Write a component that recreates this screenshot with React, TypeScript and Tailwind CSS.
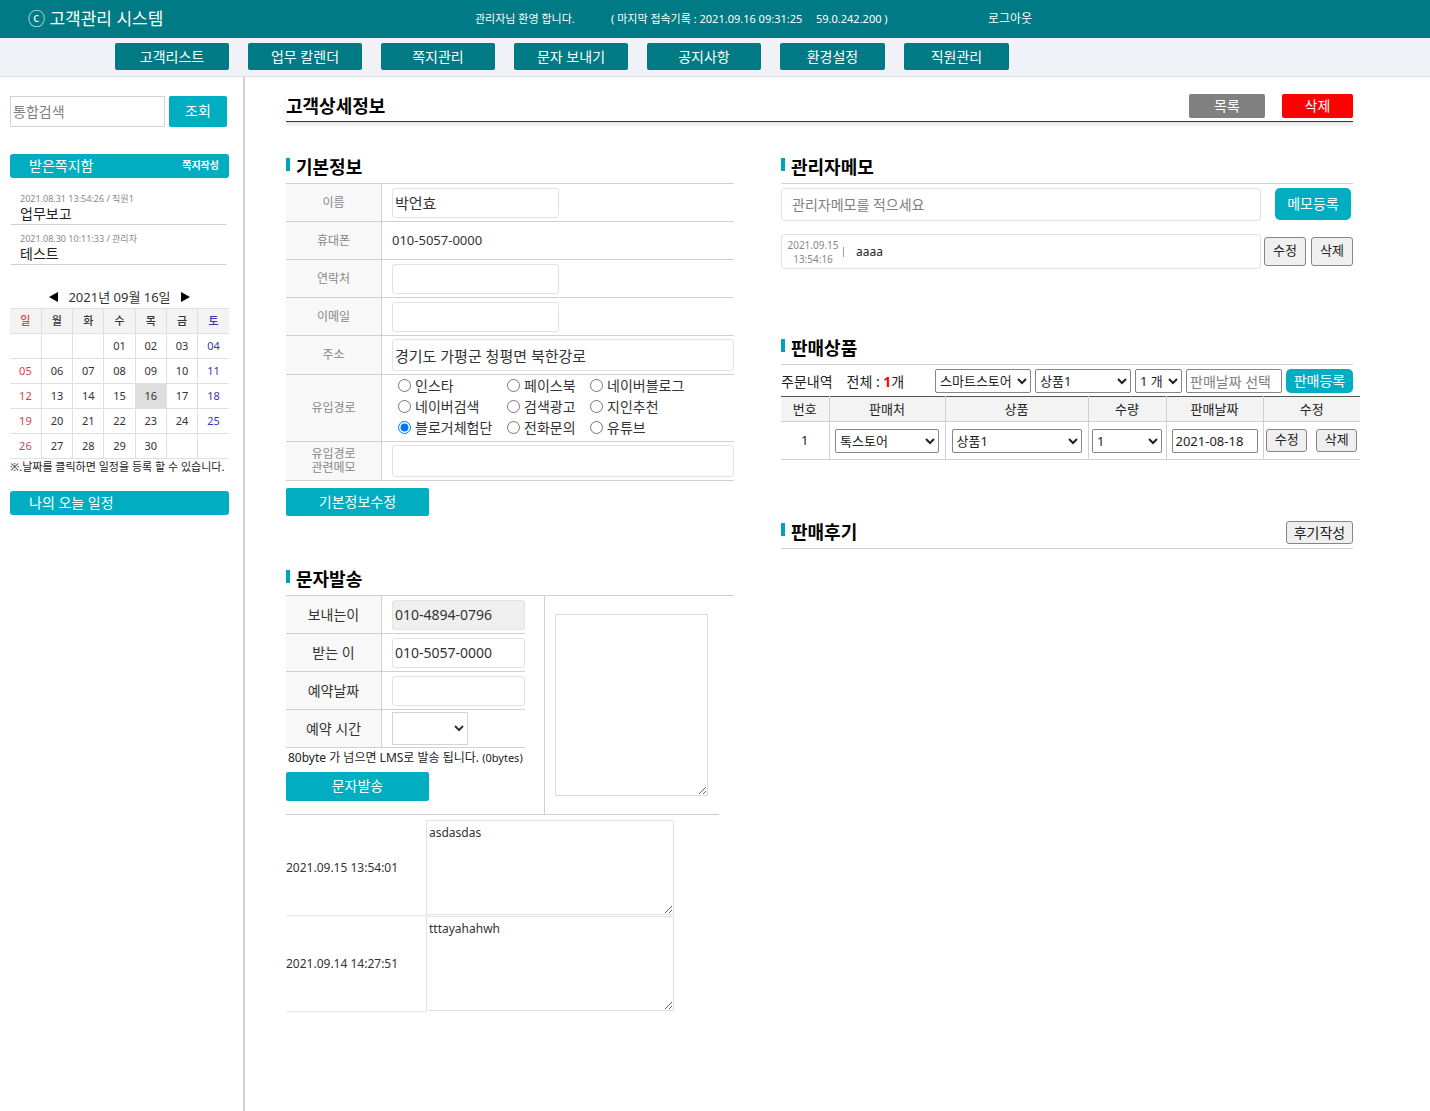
import { useState } from 'react';
import type { ReactNode } from 'react';

const menus = ['고객리스트', '업무 칼렌더', '쪽지관리', '문자 보내기', '공지사항'];
const adminMenus = ['환경설정', '직원관리'];

const messages = [
  { date: '2021.08.31 13:54:26', writer: '직원1', title: '업무보고' },
  { date: '2021.08.30 10:11:33', writer: '관리자', title: '테스트' },
];

const weekDays = ['일', '월', '화', '수', '목', '금', '토'];

const weeks = [
  ['', '', '', '01', '02', '03', '04'],
  ['05', '06', '07', '08', '09', '10', '11'],
  ['12', '13', '14', '15', '16', '17', '18'],
  ['19', '20', '21', '22', '23', '24', '25'],
  ['26', '27', '28', '29', '30', '', ''],
];

const routes = [
  '인스타',
  '페이스북',
  '네이버블로그',
  '네이버검색',
  '검색광고',
  '지인추천',
  '블로거체험단',
  '전화문의',
  '유튜브',
];

const history = [
  { date: '2021.09.15 13:54:01', text: 'asdasdas' },
  { date: '2021.09.14 14:27:51', text: 'tttayahahwh' },
];

const dayColor = (index: number) => {
  if (index === 0) return 'text-[#cf4450]';
  if (index === 6) return 'text-[#3b35b8]';
  return 'text-[#333]';
};

function Header() {
  return (
    <header>
      <div className="flex h-[38px] items-center bg-[#007a84] text-[11px] text-white">
        <h1 className="w-[475px] pl-[28px] text-[17px]">ⓒ 고객관리 시스템</h1>
        <span className="w-[136px]">관리자님 환영 합니다.</span>
        <span className="w-[205px]">( 마지막 접속기록 : 2021.09.16 09:31:25</span>
        <span className="w-[172px]">59.0.242.200 )</span>
        <a href="#logout" className="text-[12px]">로그아웃</a>
      </div>
      <nav className="flex h-[39px] items-center gap-[19px] border-b border-[#dcdedf] bg-[#f0f2f7] pb-[2px] pl-[115px] text-[14px] text-white">
        {menus.map((menu) => (
          <a
            key={menu}
            href="#menu"
            className="flex h-[27px] w-[114px] items-center justify-center rounded-[2px] bg-[#007a84]"
          >
            {menu}
          </a>
        ))}
        {adminMenus.map((menu) => (
          <a
            key={menu}
            href="#menu"
            className="flex h-[27px] w-[105px] items-center justify-center rounded-[2px] bg-[#007a84]"
          >
            {menu}
          </a>
        ))}
      </nav>
    </header>
  );
}

function Calendar() {
  return (
    <div className="mt-[22px]">
      <div className="flex h-[21px] items-center justify-center gap-[10px] text-[13px] text-[#333]">
        <button type="button" aria-label="이전 달">
          <svg width="9" height="10" viewBox="0 0 9 10">
            <path d="M9 0v10L0 5z" fill="#000" />
          </svg>
        </button>
        <span>2021년 09월 16일</span>
        <button type="button" aria-label="다음 달">
          <svg width="9" height="10" viewBox="0 0 9 10">
            <path d="M0 0v10l9-5z" fill="#000" />
          </svg>
        </button>
      </div>
      <table className="w-full table-fixed border-collapse text-center text-[11px] leading-[24px]">
        <thead>
          <tr className="h-[25px] border-y border-[#e0e0e0] bg-[#f3f3f3]">
            {weekDays.map((day, index) => (
              <th
                key={day}
                className={`border-r border-[#e0e0e0] p-0 font-medium last:border-r-0 ${dayColor(index)}`}
              >
                {day}
              </th>
            ))}
          </tr>
        </thead>
        <tbody>
          {weeks.map((week, row) => (
            <tr key={row} className="h-[25px] border-b border-[#e0e0e0]">
              {week.map((day, index) => (
                <td
                  key={index}
                  className={`border-r border-[#e0e0e0] p-0 last:border-r-0 ${dayColor(index)} ${
                    day === '16' ? 'bg-[#dedede]' : ''
                  }`}
                >
                  {day}
                </td>
              ))}
            </tr>
          ))}
        </tbody>
      </table>
      <p className="text-[11px] leading-[16px] whitespace-nowrap text-[#222]">
        ※.날짜를 클릭하면 일정을 등록 할 수 있습니다.
      </p>
    </div>
  );
}

function Sidebar() {
  return (
    <aside className="w-[245px] shrink-0 border-r-2 border-[#d2d2d2] pt-[19px] pr-[14px] pl-[10px]">
      <form className="flex gap-1" onSubmit={(e) => e.preventDefault()}>
        <input
          type="text"
          aria-label="통합검색"
          placeholder="통합검색"
          className="h-[31px] w-[155px] border border-[#d3d3d3] px-[2px] text-[14px] placeholder:text-[#808080]"
        />
        <button type="submit" className="h-[31px] w-[58px] rounded-[2px] bg-[#00adc1] text-[14px] text-white">
          조회
        </button>
      </form>

      <div className="mt-[27px] flex h-6 items-center justify-between rounded-[3px] bg-[#00adc1] pr-[10px] pb-[2px] pl-[19px] text-[14px] text-white">
        <h2>받은쪽지함</h2>
        <a href="#write" className="text-[10px] font-bold">쪽지작성</a>
      </div>
      <ul className="mt-[7px] mr-[3px] ml-[1px]">
        {messages.map((message) => (
          <li key={message.date} className="h-10 border-b border-[#cfcfcf] pt-[7px] pl-[9px]">
            <p className="text-[9px] leading-[14px] text-[#888]">
              {message.date} / {message.writer}
            </p>
            <p className="text-[14px] leading-[16px] text-[#222]">{message.title}</p>
          </li>
        ))}
      </ul>

      <Calendar />

      <h2 className="mt-4 flex h-6 items-center rounded-[3px] bg-[#00adc1] pb-[2px] pl-[19px] text-[14px] text-white">
        나의 오늘 일정
      </h2>
    </aside>
  );
}

function SectionTitle({ title, children }: { title: string; children?: ReactNode }) {
  return (
    <div className="flex h-[30px] items-center justify-between border-b border-[#d0d0d0] pb-[3px]">
      <div className="flex items-start gap-[6px]">
        <span className="mt-[4px] h-[13px] w-1 bg-[#00a5b5]" />
        <h3 className="text-[18px] leading-[26px] font-bold text-black">{title}</h3>
      </div>
      {children}
    </div>
  );
}

function FormRow({ label, id, children }: { label: ReactNode; id?: string; children: ReactNode }) {
  return (
    <tr>
      <th className="w-[96px] border-r border-b border-[#d0d0d0] bg-[#f8f8f8] p-0 text-center font-normal">
        {id ? <label htmlFor={id}>{label}</label> : label}
      </th>
      <td className="h-[38px] border-b border-[#d0d0d0] py-0 pr-0 pl-[10px]">{children}</td>
    </tr>
  );
}

function BasicInfo() {
  const [route, setRoute] = useState('블로거체험단');

  return (
    <section>
      <SectionTitle title="기본정보" />
      <table className="w-full border-separate border-spacing-0 text-[12px] leading-[14px] text-[#888]">
        <tbody>
          <FormRow label="이름" id="name">
            <input
              id="name"
              defaultValue="박언효"
              className="block h-[30px] w-[167px] rounded-[3px] border border-[#e2e2e2] px-[2px] text-[15px] text-[#333]"
            />
          </FormRow>
          <FormRow label="휴대폰">
            <span className="text-[13px] text-[#333]">010-5057-0000</span>
          </FormRow>
          <FormRow label="연락처" id="tel">
            <input id="tel" className="block h-[30px] w-[167px] rounded-[3px] border border-[#e2e2e2] px-[2px]" />
          </FormRow>
          <FormRow label="이메일" id="email">
            <input id="email" className="block h-[30px] w-[167px] rounded-[3px] border border-[#e2e2e2] px-[2px]" />
          </FormRow>
          <FormRow label="주소" id="address">
            <input
              id="address"
              defaultValue="경기도 가평군 청평면 북한강로"
              className="my-[3px] block h-[32px] w-full rounded-[3px] border border-[#e2e2e2] px-[2px] text-[15px] text-[#333]"
            />
          </FormRow>
          <FormRow label="유입경로">
            <div className="grid grid-cols-[109px_83px_1fr] pb-[3px] pl-[6px] text-[14px] leading-[21px] text-[#333]">
              {routes.map((name) => (
                <label key={name} className="flex items-center gap-1 whitespace-nowrap">
                  <input
                    type="radio"
                    name="route"
                    checked={route === name}
                    onChange={() => setRoute(name)}
                    className="size-[13px]"
                  />
                  {name}
                </label>
              ))}
            </div>
          </FormRow>
          <FormRow
            id="routeMemo"
            label={
              <>
                유입경로
                <br />
                관련메모
              </>
            }
          >
            <input
              id="routeMemo"
              className="my-[3px] block h-[32px] w-full rounded-[3px] border border-[#e2e2e2] px-[2px]"
            />
          </FormRow>
        </tbody>
      </table>
      <button type="button" className="mt-[7px] block h-[28px] w-[143px] rounded-[2px] bg-[#00adc1] text-[14px] text-white">
        기본정보수정
      </button>
    </section>
  );
}

function SmsForm() {
  return (
    <section className="mt-[50px]">
      <SectionTitle title="문자발송" />
      <div className="mr-[15px] flex border-b border-[#d0d0d0]">
        <div className="w-[259px] border-r border-[#d0d0d0] pr-[19px] pb-[13px]">
          <table className="w-full border-separate border-spacing-0 text-[14px] leading-[18px] text-[#333]">
            <tbody>
              <FormRow label="보내는이" id="sender">
                <input
                  id="sender"
                  readOnly
                  defaultValue="010-4894-0796"
                  className="block h-[30px] w-full rounded-[3px] border border-[#e2e2e2] bg-[#efefef] px-[2px]"
                />
              </FormRow>
              <FormRow label="받는 이" id="receiver">
                <input
                  id="receiver"
                  defaultValue="010-5057-0000"
                  className="block h-[30px] w-full rounded-[3px] border border-[#e2e2e2] px-[2px]"
                />
              </FormRow>
              <FormRow label="예약날짜" id="reserveDate">
                <input id="reserveDate" className="block h-[30px] w-full rounded-[3px] border border-[#e2e2e2] px-[2px]" />
              </FormRow>
              <FormRow label="예약 시간" id="reserveTime">
                <select id="reserveTime" className="block h-[33px] w-[76px] border border-[#d3d3d3]">
                  <option></option>
                </select>
              </FormRow>
            </tbody>
          </table>
          <p className="pl-[2px] text-[12px] leading-[20px] whitespace-nowrap text-[#222]">
            80byte 가 넘으면 LMS로 발송 됩니다. <span className="text-[11px]">(0bytes)</span>
          </p>
          <button type="button" className="mt-1 block h-[29px] w-[143px] rounded-[2px] bg-[#00adc1] text-[14px] text-white">
            문자발송
          </button>
        </div>
        <textarea
          aria-label="문자내용"
          className="mt-[18px] ml-[10px] h-[182px] w-[153px] border border-[#dcdcdc] p-[2px] text-[12px]"
        />
      </div>

      <table className="mt-[5px] border-separate border-spacing-0 text-[12px] text-[#333]">
        <tbody>
          {history.map((item) => (
            <tr key={item.date}>
              <td className="w-[140px] border-b border-[#e5e5e5] p-0">{item.date}</td>
              <td className="p-0">
                <textarea
                  aria-label={item.date}
                  defaultValue={item.text}
                  className="mb-px block h-[95px] w-[248px] border border-[#e2e2e2] px-[2px] py-[3px] leading-[18px]"
                />
              </td>
            </tr>
          ))}
        </tbody>
      </table>
    </section>
  );
}

function AdminMemo() {
  return (
    <section>
      <SectionTitle title="관리자메모" />
      <form className="mt-1 flex gap-[14px] pr-[2px] text-[14px]" onSubmit={(e) => e.preventDefault()}>
        <input
          type="text"
          aria-label="관리자메모"
          placeholder="관리자메모를 적으세요"
          className="h-[33px] min-w-0 flex-1 rounded-[3px] border border-[#e2e2e2] px-[10px] placeholder:text-[#808080]"
        />
        <button type="submit" className="h-[32px] w-[76px] rounded-[5px] bg-[#00adc1] text-white">
          메모등록
        </button>
      </form>
      <div className="mt-[13px] flex items-center">
        <div className="flex h-[35px] flex-1 items-center rounded-[3px] border border-[#e2e2e2] pl-[5px] text-[12px] text-[#222]">
          <span className="w-[52px] text-center text-[10px] leading-[14px] text-[#888]">
            2021.09.15
            <br />
            13:54:16
          </span>
          <span className="ml-[4px] h-[10px] w-px bg-[#a0a0a0]" />
          <span className="ml-[12px]">aaaa</span>
        </div>
        <button type="button" className="ml-[3px] h-[29px] w-[42px] rounded-[3px] border border-[#858585] bg-[#efefef] text-[13px] text-[#222]">
          수정
        </button>
        <button type="button" className="ml-[5px] h-[29px] w-[42px] rounded-[3px] border border-[#858585] bg-[#efefef] text-[13px] text-[#222]">
          삭제
        </button>
      </div>
    </section>
  );
}

function SaleItems() {
  return (
    <section className="mt-[66px]">
      <SectionTitle title="판매상품" />
      <div className="flex items-center gap-1 pt-[4px] pb-[3px] text-[13px] text-[#222]">
        <span className="text-[14px]">주문내역</span>
        <span className="mr-auto ml-[10px] text-[14px]">
          전체 : <b className="text-[#f00]">1</b>개
        </span>
        <select aria-label="판매처" className="h-[24px] w-[96px] rounded-[2px] border border-[#858585]">
          <option>스마트스토어</option>
          <option>톡스토어</option>
        </select>
        <select aria-label="상품" className="h-[24px] w-[96px] rounded-[2px] border border-[#858585]">
          <option>상품1</option>
        </select>
        <select aria-label="수량" className="h-[24px] w-[47px] rounded-[2px] border border-[#858585]">
          <option>1 개</option>
        </select>
        <input
          type="text"
          aria-label="판매날짜"
          placeholder="판매날짜 선택"
          className="h-[24px] w-[96px] rounded-[2px] border border-[#858585] px-[3px] text-[14px] placeholder:text-[#808080]"
        />
        <button type="button" className="h-[24px] w-[67px] rounded-[5px] bg-[#00adc1] text-[14px] text-white">
          판매등록
        </button>
      </div>
      {/* the table is a little wider than the section line above it */}
      <div className="-mr-[7px]">
        <table className="w-full table-fixed border-collapse text-center text-[13px] text-[#222]">
          <colgroup>
            <col className="w-[48px]" />
            <col className="w-[116px]" />
            <col className="w-[143px]" />
            <col className="w-[78px]" />
            <col className="w-[97px]" />
            <col />
          </colgroup>
          <thead>
            <tr className="h-[25px] border-t border-b border-t-[#555] border-b-[#d0d0d0] bg-[#f3f3f3] leading-[20px]">
              {['번호', '판매처', '상품', '수량', '판매날짜', '수정'].map((name) => (
                <th key={name} className="border-r border-r-[#d0d0d0] p-0 font-normal last:border-r-0">
                  {name}
                </th>
              ))}
            </tr>
          </thead>
          <tbody>
            <tr className="h-[38px] border-b border-[#d0d0d0] [&>td]:border-r [&>td]:border-[#d0d0d0] [&>td]:p-0 [&>td:last-child]:border-r-0">
              <td>1</td>
              <td>
                <select aria-label="판매처" defaultValue="톡스토어" className="h-[24px] w-[104px] rounded-[2px] border border-[#858585]">
                  <option>스마트스토어</option>
                  <option>톡스토어</option>
                </select>
              </td>
              <td>
                <select aria-label="상품" className="h-[24px] w-[130px] rounded-[2px] border border-[#858585]">
                  <option>상품1</option>
                </select>
              </td>
              <td>
                <select aria-label="수량" className="h-[24px] w-[70px] rounded-[2px] border border-[#858585]">
                  <option>1</option>
                </select>
              </td>
              <td>
                <input
                  type="text"
                  aria-label="판매날짜"
                  defaultValue="2021-08-18"
                  className="h-[24px] w-[86px] rounded-[2px] border border-[#858585] px-[3px]"
                />
              </td>
              <td>
                <div className="flex justify-center gap-[9px]">
                  <button type="button" className="h-[23px] w-[41px] rounded-[3px] border border-[#858585] bg-[#efefef]">
                    수정
                  </button>
                  <button type="button" className="h-[23px] w-[41px] rounded-[3px] border border-[#858585] bg-[#efefef]">
                    삭제
                  </button>
                </div>
              </td>
            </tr>
          </tbody>
        </table>
      </div>
    </section>
  );
}

export default function App() {
  return (
    <div className="flex min-h-screen flex-col bg-white font-['Noto_Sans','Noto_Sans_CJK_KR',sans-serif] [&_button]:pb-[2px]">
      <Header />
      <div className="flex flex-1">
        <Sidebar />
        <main className="flex-1 pt-[17px] pr-[77px] pb-10 pl-[41px]">
          <div className="flex items-start border-b border-[#333] pb-[3px] text-[14px] text-white shadow-[0_3px_3px_rgba(0,0,0,0.1)]">
            <h2 className="mr-auto text-[18px] leading-[24px] font-bold text-black">고객상세정보</h2>
            <button type="button" className="h-6 w-[76px] rounded-[2px] bg-[#808080]">
              목록
            </button>
            <button type="button" className="ml-[17px] h-6 w-[71px] rounded-[2px] bg-[#f00]">
              삭제
            </button>
          </div>

          <div className="mt-[32px] grid grid-cols-[448fr_572fr] items-start gap-[47px]">
            <div>
              <BasicInfo />
              <SmsForm />
            </div>
            <div>
              <AdminMemo />
              <SaleItems />
              <section className="mt-[59px]">
                <SectionTitle title="판매후기">
                  <button type="button" className="h-[23px] w-[67px] rounded-[3px] border border-[#858585] bg-[#efefef] text-[14px] text-[#222]">
                    후기작성
                  </button>
                </SectionTitle>
              </section>
            </div>
          </div>
        </main>
      </div>
    </div>
  );
}
